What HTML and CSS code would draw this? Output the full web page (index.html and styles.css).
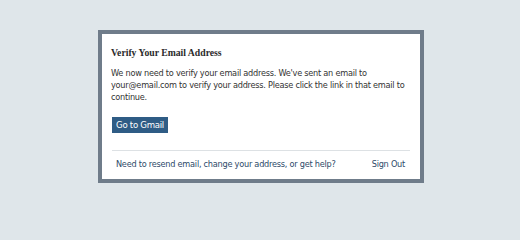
FILE: index.html
```html
<!DOCTYPE html>
<html>
<head>
<meta charset="utf-8">
<link rel="stylesheet" href="styles.css">
</head>
<body>
<div class="page">
  <div class="card">
    <h1 class="title">Verify Your Email Address</h1>
    <p class="message">We now need to verify your email address. We've sent an email to your@email.com to verify your address. Please click the link in that email to continue.</p>
    <a class="button" href="#">Go to Gmail</a>
    <div class="footer">
      <a class="link" href="#">Need to resend email, change your address, or get help?</a>
      <a class="link" href="#">Sign Out</a>
    </div>
  </div>
</div>
</body>
</html>
```
FILE: styles.css
```css
html, body {
  margin: 0;
  padding: 0;
  background: #dfe6ea;
}
.page {
  padding: 30px 0 0 98px;
}
.card {
  box-sizing: border-box;
  width: 326px;
  height: 153px;
  background: #fff;
  border: 4px solid #6f7c8a;
  padding: 12.5px 10px 0 9px;
  display: flex;
  flex-direction: column;
  align-items: flex-start;
}
.title {
  margin: 0;
  font-family: "Liberation Serif", serif;
  font-weight: bold;
  font-size: 9.7px;
  line-height: 12px;
  color: #2a2a2a;
}
.message {
  margin: 8.5px 0 0 0;
  font-family: "DejaVu Sans", sans-serif;
  font-size: 8.2px;
  letter-spacing: -0.25px;
  line-height: 12px;
  color: #333;
  width: 306px;
}
.button {
  margin: 14px 0 0 1px;
  background: #2f5c85;
  color: #fff;
  text-decoration: none;
  font-family: "DejaVu Sans", sans-serif;
  font-size: 8.6px;
  letter-spacing: -0.3px;
  line-height: 16px;
  height: 16px;
  width: 56px;
  text-align: center;
}
.footer {
  margin: 17px 0 0 1px;
  align-self: stretch;
  border-top: 1px solid #dde1e4;
  padding: 7px 5px 0 4px;
  display: flex;
  justify-content: space-between;
}
.link {
  font-family: "DejaVu Sans", sans-serif;
  font-size: 8.2px;
  letter-spacing: -0.25px;
  line-height: 12px;
  color: #2d4a69;
  text-decoration: none;
}
```
